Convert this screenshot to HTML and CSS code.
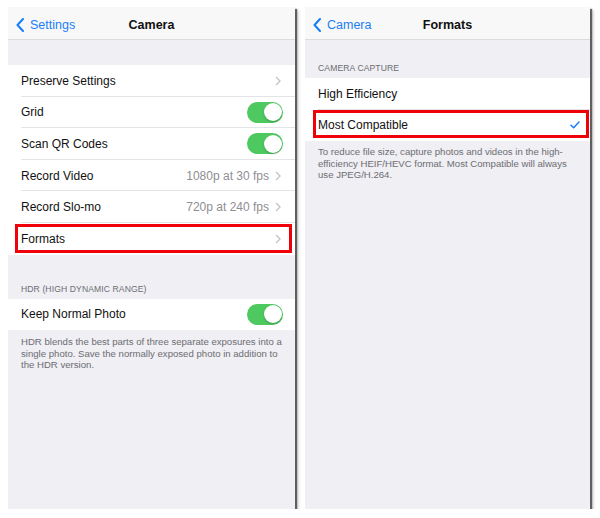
FILE: index.html
```html
<!DOCTYPE html>
<html>
<head>
<meta charset="utf-8">
<link rel="stylesheet" href="styles.css">
</head>
<body>
<div class="stage">
  <section class="phone phone-left">
    <header class="nav">
      <div class="back">
        <svg class="back-chev" width="8" height="14" viewBox="0 0 8 14"><polyline points="7,1 1.5,7 7,13" fill="none" stroke="#157efb" stroke-width="2" stroke-linecap="round" stroke-linejoin="round"/></svg>
        <span>Settings</span>
      </div>
      <div class="title">Camera</div>
    </header>
    <div class="gap-top"></div>
    <ul class="group">
      <li class="row"><span class="label">Preserve Settings</span><span class="right"><svg class="chev" width="6" height="10" viewBox="0 0 6 10"><polyline points="1,1 5,5 1,9" fill="none" stroke="#c4c4c9" stroke-width="1.4"/></svg></span></li>
      <li class="row"><span class="label">Grid</span><span class="right"><span class="toggle"></span></span></li>
      <li class="row"><span class="label">Scan QR Codes</span><span class="right"><span class="toggle"></span></span></li>
      <li class="row"><span class="label">Record Video</span><span class="right"><span class="value">1080p at 30 fps</span><svg class="chev" width="6" height="10" viewBox="0 0 6 10"><polyline points="1,1 5,5 1,9" fill="none" stroke="#c4c4c9" stroke-width="1.4"/></svg></span></li>
      <li class="row"><span class="label">Record Slo-mo</span><span class="right"><span class="value">720p at 240 fps</span><svg class="chev" width="6" height="10" viewBox="0 0 6 10"><polyline points="1,1 5,5 1,9" fill="none" stroke="#c4c4c9" stroke-width="1.4"/></svg></span></li>
      <li class="row row-last highlight hl-left"><span class="label">Formats</span><span class="right"><svg class="chev" width="6" height="10" viewBox="0 0 6 10"><polyline points="1,1 5,5 1,9" fill="none" stroke="#c4c4c9" stroke-width="1.4"/></svg></span></li>
    </ul>
    <div class="section-head hdr-head">HDR (HIGH DYNAMIC RANGE)</div>
    <ul class="group">
      <li class="row row-last"><span class="label">Keep Normal Photo</span><span class="right"><span class="toggle"></span></span></li>
    </ul>
    <p class="foot">HDR blends the best parts of three separate exposures into a single photo. Save the normally exposed photo in addition to the HDR version.</p>
  </section>

  <section class="phone phone-right">
    <header class="nav">
      <div class="back">
        <svg class="back-chev" width="8" height="14" viewBox="0 0 8 14"><polyline points="7,1 1.5,7 7,13" fill="none" stroke="#157efb" stroke-width="2" stroke-linecap="round" stroke-linejoin="round"/></svg>
        <span>Camera</span>
      </div>
      <div class="title">Formats</div>
    </header>
    <div class="section-head cap-head">CAMERA CAPTURE</div>
    <ul class="group">
      <li class="row"><span class="label">High Efficiency</span></li>
      <li class="row row-last highlight hl-right"><span class="label">Most Compatible</span><span class="right"><svg class="check" width="10" height="8" viewBox="0 0 10 8"><polyline points="1,4.2 3.6,6.8 9,1" fill="none" stroke="#157efb" stroke-width="1.5" stroke-linecap="round" stroke-linejoin="round"/></svg></span></li>
    </ul>
    <p class="foot foot-right">To reduce file size, capture photos and videos in the high-efficiency HEIF/HEVC format. Most Compatible will always use JPEG/H.264.</p>
  </section>
</div>
</body>
</html>
```

FILE: styles.css
```css
* { box-sizing: border-box; }
html, body { margin: 0; padding: 0; background: #ffffff; }
body { font-family: "Liberation Sans", Arial, sans-serif; color: #111; }

.stage {
  display: flex;
  gap: 10px;
  padding: 7px 0 0 8px;
}

.phone {
  height: 502px;
  background: #efeff4;
  box-shadow: 2px 2px 1px rgba(60, 60, 60, 0.75), 3px 3px 3px rgba(0, 0, 0, 0.25);
  display: flex;
  flex-direction: column;
}
.phone-left { width: 287px; }
.phone-right { width: 285px; }

.nav {
  height: 33px;
  padding-top: 3px;
  background: #f8f8f8;
  border-bottom: 1px solid #dcdce0;
  display: flex;
  align-items: center;
  position: relative;
  flex: none;
}
.back {
  display: flex;
  align-items: center;
  gap: 6px;
  padding-left: 8px;
  color: #1a7ff5;
  font-size: 12.5px;
}
.back-chev { display: block; }
.title {
  position: absolute;
  left: 0;
  right: 0;
  top: 3px;
  bottom: 0;
  display: flex;
  align-items: center;
  justify-content: center;
  font-size: 12.5px;
  font-weight: bold;
  color: #111;
  pointer-events: none;
}

.gap-top { height: 25px; flex: none; }

.group {
  list-style: none;
  margin: 0;
  padding: 0;
  background: #fff;
  flex: none;
}
.row {
  height: 31.6px;
  display: flex;
  align-items: center;
  justify-content: space-between;
  padding: 0 12px 0 13px;
  position: relative;
  font-size: 12px;
}
.row::after {
  content: "";
  position: absolute;
  left: 13px;
  right: 0;
  bottom: 0;
  height: 1px;
  background: #e4e4e8;
}
.row-last::after { display: none; }

.label { color: #111; }
.right {
  display: flex;
  align-items: center;
  gap: 6px;
}
.value { color: #8e8e93; font-size: 12px; }
.chev { display: block; margin-right: 2px; }
.check { display: block; margin-right: -2px; }

.toggle {
  width: 36px;
  height: 21px;
  border-radius: 11px;
  background: #4dc960;
  position: relative;
  display: block;
}
.toggle::after {
  content: "";
  position: absolute;
  right: 1.5px;
  top: 1.5px;
  width: 18px;
  height: 18px;
  border-radius: 50%;
  background: #fff;
  box-shadow: 0 1px 2px rgba(0, 0, 0, 0.25);
}

.highlight::before {
  content: "";
  position: absolute;
  top: 1px;
  bottom: 2px;
  border: 3px solid #f00008;
  z-index: 2;
}
.hl-left::before { left: 7px; right: 3px; }
.hl-right::before { left: 8px; right: 1px; top: 0; bottom: 3px; }

.section-head {
  font-size: 8.6px;
  color: #6d6d72;
  padding-left: 13px;
  letter-spacing: 0.1px;
  flex: none;
}
.hdr-head { margin-top: 29px; height: 15px; }
.cap-head { margin-top: 23px; height: 15px; }

.foot {
  margin: 0;
  padding: 6px 10px 0 13px;
  font-size: 9.6px;
  line-height: 11.5px;
  color: #6d6d72;
}
.foot-right { padding-top: 5px; padding-right: 14px; }
```
